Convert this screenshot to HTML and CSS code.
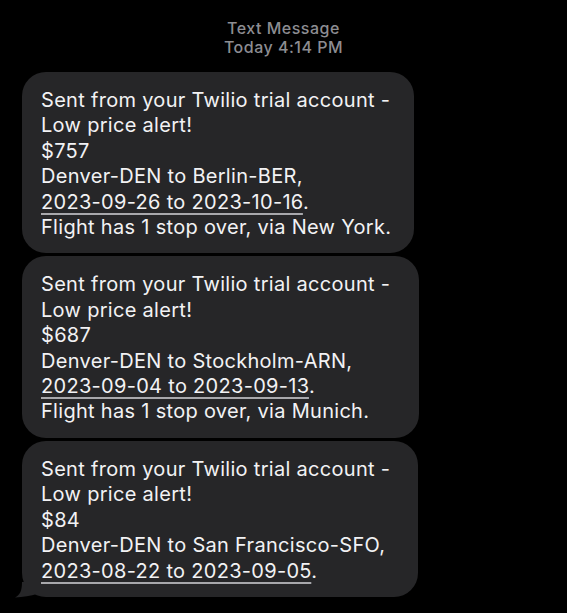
FILE: index.html
```html
<!DOCTYPE html>
<html lang="en">
<head>
<meta charset="utf-8">
<title>Text Message</title>
<link rel="stylesheet" href="styles.css">
</head>
<body>
<div class="screen">
  <header class="meta">
    <div class="meta-title">Text Message</div>
    <div class="meta-time">Today 4:14 PM</div>
  </header>
  <div class="thread">
    <div class="bubble bubble-a">
      Sent from your Twilio trial account -<br>
      Low price alert!<br>
      $757<br>
      Denver-DEN to Berlin-BER,<br>
      <span class="link">2023-09-26 to 2023-10-16</span>.<br>
      Flight has 1 stop over, via New York.
    </div>
    <div class="bubble bubble-b">
      Sent from your Twilio trial account -<br>
      Low price alert!<br>
      $687<br>
      Denver-DEN to Stockholm-ARN,<br>
      <span class="link">2023-09-04 to 2023-09-13</span>.<br>
      Flight has 1 stop over, via Munich.
    </div>
    <div class="bubble bubble-c last">
      Sent from your Twilio trial account -<br>
      Low price alert!<br>
      $84<br>
      Denver-DEN to San Francisco-SFO,<br>
      <span class="link">2023-08-22 to 2023-09-05</span>.
      <svg class="tail" width="22" height="16" viewBox="0 0 22 16" aria-hidden="true">
        <path d="M22 0 L22 12 C16 14 8 15 0 15.5 C5 13 7 9 7 0 Z" fill="#262628"/>
      </svg>
    </div>
  </div>
</div>
</body>
</html>
```
FILE: styles.css
```css
html, body {
  margin: 0;
  padding: 0;
  background: #000;
}
body {
  width: 567px;
  height: 613px;
  overflow: hidden;
  font-family: Inter, "Noto Sans", sans-serif;
}
.screen {
  display: flex;
  flex-direction: column;
  padding: 19px 0 0 22px;
}
.meta {
  display: flex;
  flex-direction: column;
  align-items: center;
  color: #8d8d92;
  font-size: 16px;
  font-weight: 500;
  letter-spacing: 0.5px;
  line-height: 19px;
  margin-left: -22px;
  margin-bottom: 15px;
}
.thread {
  display: flex;
  flex-direction: column;
  gap: 3px;
}
.bubble {
  position: relative;
  background: #262628;
  color: #f2f2f4;
  font-size: 20px;
  letter-spacing: 0.3px;
  line-height: 25.4px;
  border-radius: 24px;
  padding: 16px 10px 13px 19px;
  box-sizing: border-box;
}
.bubble-a { width: 392px; }
.bubble-b { width: 397px; }
.bubble-c { width: 396px; }
.link {
  text-decoration: underline;
  text-decoration-color: #a8a8ac;
  text-decoration-thickness: 2px;
  text-underline-offset: 4px;
}
.tail {
  position: absolute;
  left: -7px;
  bottom: -1px;
  display: block;
}
```
